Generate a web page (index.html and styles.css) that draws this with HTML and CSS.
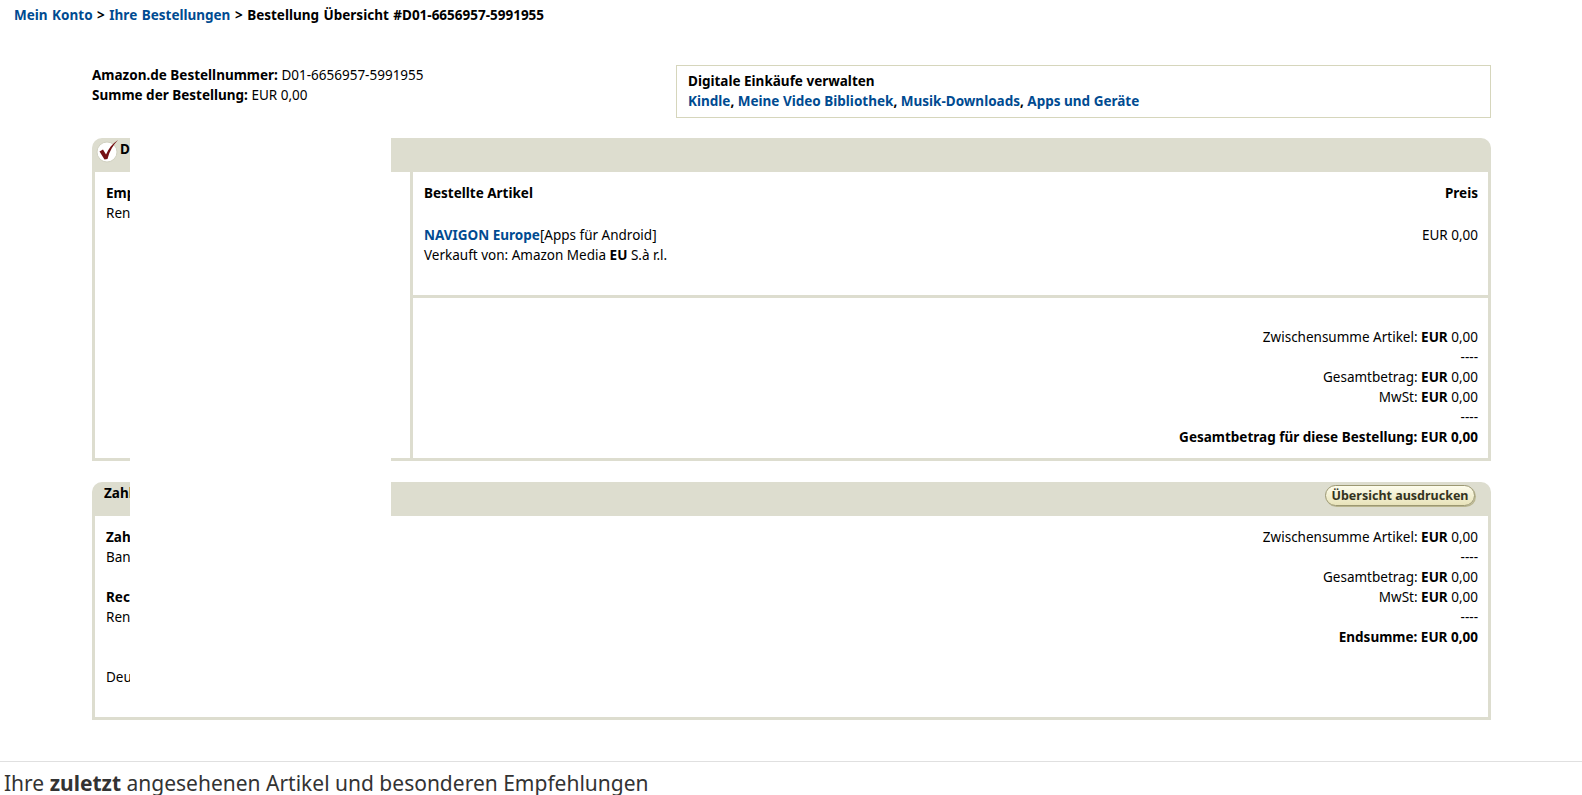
FILE: index.html
```
<!DOCTYPE html>
<html lang="de">
<head>
  <meta charset="UTF-8">
  <meta name="viewport" content="width=device-width, initial-scale=1.0">
  <title>Bestellung Übersicht</title>
  <link rel="stylesheet" href="styles.css">
</head>
<body>
  <div class="crumbs">
    <a href="#">Mein Konto</a> &gt; <a href="#">Ihre Bestellungen</a> &gt; Bestellung Übersicht #D01-6656957-5991955
  </div>

  <div class="page">
    <div class="summary">
      <div class="order-info">
        <div><b>Amazon.de Bestellnummer:</b> D01-6656957-5991955</div>
        <div><b>Summe der Bestellung:</b> EUR 0,00</div>
      </div>
      <div class="digital">
        <div>Digitale Einkäufe verwalten</div>
        <div><a href="#">Kindle</a>, <a href="#">Meine Video Bibliothek</a>, <a href="#">Musik-Downloads</a>, <a href="#">Apps und Geräte</a></div>
      </div>
    </div>

    <div class="box">
      <div class="box-head first">
        <svg class="check" width="24" height="24" viewBox="0 0 24 24">
          <circle cx="11" cy="13" r="10" fill="#fff" stroke="#d2d2c2" stroke-width="1"/>
          <path d="M3.5 12.5 L7 10.5 L10 15.5 C12.5 9.5 16.5 4.5 22 1 C17 6 13.5 12 11.5 20 L8.5 20.5 Z" fill="#741014"/>
        </svg>
        <span class="head-title">Digitale Bestellung</span>
      </div>
      <div class="box-body split">
        <div class="col-left">
          <div><b>Empfänger</b></div>
          <div>Rene</div>
        </div>
        <div class="col-right">
          <div class="items">
            <div class="row"><b>Bestellte Artikel</b><b>Preis</b></div>
            <div class="row item">
              <div><a href="#"><b>NAVIGON Europe</b></a>[Apps für Android]</div>
              <div>EUR 0,00</div>
            </div>
            <div>Verkauft von: Amazon Media <b>EU</b> S.à r.l.</div>
          </div>
          <div class="totals">
            <div>Zwischensumme Artikel: <b>EUR</b> 0,00</div>
            <div>----</div>
            <div>Gesamtbetrag: <b>EUR</b> 0,00</div>
            <div>MwSt: <b>EUR</b> 0,00</div>
            <div>----</div>
            <div><b>Gesamtbetrag für diese Bestellung: EUR 0,00</b></div>
          </div>
        </div>
      </div>
    </div>

    <div class="box">
      <div class="box-head">
        <span>Zahlungsinformationen</span>
        <button class="print-btn">Übersicht ausdrucken</button>
      </div>
      <div class="box-body pay">
        <div class="pay-left">
          <div><b>Zahlungsart</b></div>
          <div>Bankeinzug</div>
          <div>&nbsp;</div>
          <div><b>Rechnungsadresse</b></div>
          <div>Rene</div>
          <div>&nbsp;</div>
          <div>&nbsp;</div>
          <div>Deutschland</div>
        </div>
        <div class="totals-plain">
          <div>Zwischensumme Artikel: <b>EUR</b> 0,00</div>
          <div>----</div>
          <div>Gesamtbetrag: <b>EUR</b> 0,00</div>
          <div>MwSt: <b>EUR</b> 0,00</div>
          <div>----</div>
          <div><b>Endsumme: EUR 0,00</b></div>
        </div>
      </div>
    </div>

    <div class="blank-out"></div>
  </div>

  <div class="recs">Ihre <b>zuletzt</b> angesehenen Artikel und besonderen Empfehlungen</div>
</body>
</html>
```
FILE: styles.css
```
body {
  margin: 0;
  font-family: "Noto Sans", Arial, sans-serif;
  font-size: 13.5px;
  line-height: 20px;
  color: #000;
  background: #fff;
}
a {
  color: #004b91;
  text-decoration: none;
}
.crumbs {
  padding: 5px 14px;
  font-weight: bold;
  word-spacing: 1px;
}
.page {
  position: relative;
  padding: 35px 91px 0 92px;
}
.summary {
  display: flex;
  justify-content: space-between;
  align-items: flex-start;
}
.digital {
  width: 815px;
  box-sizing: border-box;
  border: 1px solid #d6d6bc;
  padding: 5px 11px 6px;
  font-weight: bold;
}
.box {
  margin-top: 20px;
}
.box + .box {
  margin-top: 21px;
}
.box-head {
  height: 34px;
  box-sizing: border-box;
  background: #ddddcf;
  border-radius: 10px 10px 0 0;
  padding: 1px 16px 0 12px;
  font-weight: bold;
  display: flex;
  justify-content: space-between;
  align-items: flex-start;
}
.box-head.first {
  justify-content: flex-start;
  padding: 1px 4px;
}
.check {
  flex: none;
}
.head-title {
  line-height: 16px;
  margin: 2px 0 0 0;
}
.box-body {
  border: 3px solid #ddddcf;
  border-top: 0;
}
.split {
  display: flex;
}
.col-left {
  width: 318px;
  box-sizing: border-box;
  padding: 11px;
  border-right: 3px solid #ddddcf;
}
.col-right {
  flex: 1;
}
.items {
  padding: 11px 10px 30px 11px;
  border-bottom: 3px solid #ddddcf;
}
.row {
  display: flex;
  justify-content: space-between;
}
.item {
  margin-top: 22px;
}
.totals {
  padding: 29px 10px 11px;
  text-align: right;
}
.pay {
  display: flex;
  justify-content: space-between;
  padding: 11px 10px 30px 11px;
}
.totals-plain {
  text-align: right;
}
.print-btn {
  margin-top: 2px;
  height: 21px;
  width: 150px;
  padding: 0;
  font-family: "Noto Sans", Arial, sans-serif;
  font-size: 12.5px;
  font-weight: bold;
  color: #33331f;
  border: 1px solid #9c9872;
  border-radius: 11px;
  background: linear-gradient(#fdfcec, #e8e3ba);
  box-shadow: 1px 1px 0 #b9b58e;
  cursor: pointer;
}
.blank-out {
  position: absolute;
  left: 130px;
  top: 108px;
  width: 261px;
  height: 562px;
  background: #fff;
}
.recs {
  margin-top: 41px;
  border-top: 1px solid #e0e0e0;
  padding: 9px 4px 0;
  font-size: 21px;
  line-height: 24px;
  color: #333;
}
```
